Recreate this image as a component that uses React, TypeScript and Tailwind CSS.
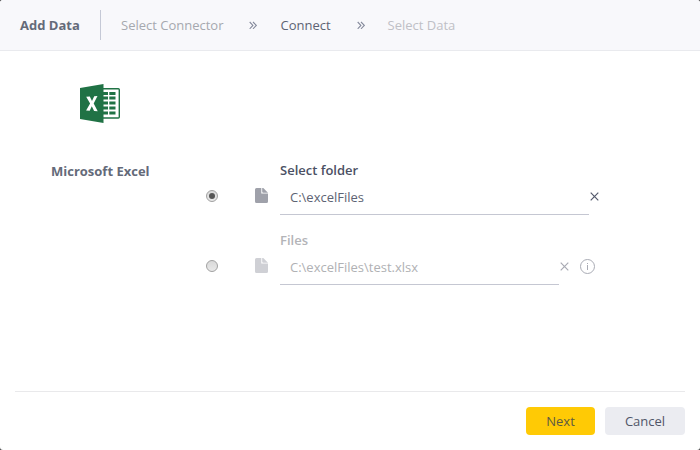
import React from "react";

function Chevrons({ className }: { className: string }) {
  return (
    <svg className={className} width="8" height="8" viewBox="0 0 8 8" fill="none" stroke="currentColor" strokeWidth="1.1">
      <path d="M0.7 1 L3.9 4.4 L0.7 7.8 M4 1 L7.3 4.4 L4 7.8" />
    </svg>
  );
}

function FileIcon({ className }: { className: string }) {
  return (
    <svg className={className} width="13" height="15" viewBox="0 0 13 15" fill="currentColor">
      <path d="M1.5 0H6.3V5.6H13V13.5A1.5 1.5 0 0 1 11.5 15H1.5A1.5 1.5 0 0 1 0 13.5V1.5A1.5 1.5 0 0 1 1.5 0Z" />
      <path d="M7.2 0H8.3L13 4.8H8.2A1 1 0 0 1 7.2 3.8Z" />
    </svg>
  );
}

function Cross({ className }: { className: string }) {
  return (
    <svg className={className} width="9" height="9" viewBox="0 0 9 9" fill="none" stroke="currentColor" strokeWidth="1.2">
      <path d="M0.7 0.7 L8.3 8.3 M8.3 0.7 L0.7 8.3" />
    </svg>
  );
}

function InfoIcon() {
  return (
    <svg className="ml-[11px] text-[#a9abb4]" width="15" height="15" viewBox="0 0 15 15" fill="none" stroke="currentColor">
      <circle cx="7.5" cy="7.5" r="7" />
      <path d="M7.5 6V11M7.5 4V5" />
    </svg>
  );
}

function ExcelLogo() {
  return (
    <svg className="ml-20 mt-[33px]" width="40" height="40" viewBox="0 0 40 40">
      <rect x="22" y="4.7" width="17.3" height="29.3" rx="1" fill="#fff" stroke="#207245" strokeWidth="1.4" />
      <g fill="#207245">
        <path d="M23 8h5v3h-5zM29.3 8H35.5v3h-6.2zM23 12.5h5v3h-5zM29.3 12.5H35.5v3h-6.2zM23 17.5h5v3h-5zM29.3 17.5H35.5v3h-6.2zM23 22.5h5v3h-5zM29.3 22.5H35.5v3h-6.2zM23 27.5h5v3h-5zM29.3 27.5H35.5v3h-6.2z" />
        <path d="M0 4L23.5 0V39L0 35Z" />
      </g>
      <path d="M6.2 12.8L9.8 12.6L12 17L14.2 12.3L17.5 12.1L13.7 19.6L17.7 27.2L14.1 27L11.8 22.3L9.7 26.7L6.1 26.5L10.1 19.6Z" fill="#fff" />
    </svg>
  );
}

function Radio({ checked = false }: { checked?: boolean }) {
  return (
    <span className="flex size-3 items-center justify-center rounded-full border border-[#a1a1a1] bg-linear-to-b from-[#d9d9d9] to-[#e9e9e9]">
      {checked && <span className="size-1.5 rounded-full bg-[#565656]" />}
    </span>
  );
}

export default function App() {
  return (
    <div className="h-[450px] w-[700px] bg-[#48484a] font-['Open_Sans',sans-serif] text-[13px] leading-5 text-[#5d6373]">
      <div className="flex h-full flex-col overflow-hidden rounded-[3px] bg-white">
        <header className="flex h-[51px] shrink-0 items-center border-b border-[#e9eaee] bg-[#f8f8fb] pl-5">
          <h1 className="w-20 font-bold text-[#646a79]">Add Data</h1>
          <div className="h-[30px] w-px bg-[#c5c9d6]" />
          <span className="ml-5 w-32 text-[#a6a8af]">Select Connector</span>
          <Chevrons className="text-[#858a9c]" />
          <span className="ml-[23.5px] w-[76.5px]">Connect</span>
          <Chevrons className="text-[#858a9c]" />
          <span className="ml-[22.5px] text-[#bfc0c6]">Select Data</span>
        </header>

        <main className="h-[340px] shrink-0">
          <ExcelLogo />
          <div className="mt-[37px] flex">
            <h2 className="ml-[51px] w-[155px] font-bold text-[#646a79]">Microsoft Excel</h2>
            <div>
              <section>
                <h3 className="-mt-px ml-[74px] font-semibold text-[#4b5064]">Select folder</h3>
                <div className="flex h-[35px]">
                  <div className="pt-2.5"><Radio checked /></div>
                  <FileIcon className="ml-[37px] mt-2 text-[#9fa1aa]" />
                  <div className="ml-3 h-[35px] w-[309px] border-b border-[#c5c7d2] pl-2.5 pt-[7px]">C:\excelFiles</div>
                  <Cross className="ml-px mt-3 text-[#555b6d]" />
                </div>
              </section>
              <section className="mt-[15px]">
                <h3 className="ml-[74px] font-semibold text-[#b3b4b8]">Files</h3>
                <div className="flex h-[35px]">
                  <div className="pt-2.5"><Radio /></div>
                  <FileIcon className="ml-[37px] mt-2 text-[#cfd0d5]" />
                  <div className="ml-3 h-[35px] w-[279px] border-b border-[#c5c7d2] pl-2.5 pt-[7px] text-[#b0b1b4]">C:\excelFiles\test.xlsx</div>
                  <Cross className="ml-px mt-3 text-[#a9abb4]" />
                  <div className="pt-[9px]"><InfoIcon /></div>
                </div>
              </section>
            </div>
          </div>
        </main>

        <footer className="mx-[15px] flex justify-end gap-2.5 border-t border-[#e9e9eb] pt-[15px]">
          <button className="h-7 w-[69px] rounded bg-[#ffca05] text-[#5d5a43]">Next</button>
          <button className="h-7 w-20 rounded bg-[#ebecf1] text-[#505568]">Cancel</button>
        </footer>
      </div>
    </div>
  );
}
